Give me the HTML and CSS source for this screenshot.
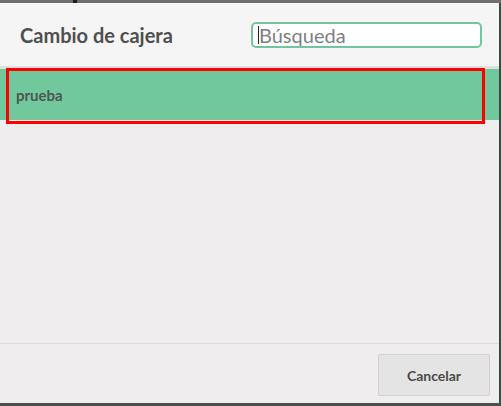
FILE: index.html
```html
<!DOCTYPE html>
<html lang="es">
<head>
<meta charset="utf-8">
<title>Cambio de cajera</title>
<link rel="stylesheet" href="styles.css">
</head>
<body>
<div class="backdrop-top"><span class="mark"></span></div>
<div class="frame">
  <div class="modal">
    <div class="modal-header">
      <h2 class="title">Cambio de cajera</h2>
      <div class="search-wrap">
        <input class="search" type="text" placeholder="Búsqueda">
        <span class="caret"></span>
      </div>
    </div>
    <div class="modal-body">
      <div class="row selected">prueba</div>
      <div class="highlight"></div>
    </div>
    <div class="modal-footer">
      <button class="btn">Cancelar</button>
    </div>
  </div>
  <div class="edge"></div>
</div>
<div class="backdrop-bottom"></div>
</body>
</html>
```
FILE: styles.css
```css
html, body {
  margin: 0;
  padding: 0;
}
body {
  width: 501px;
  height: 406px;
  background: #5e5e5e;
  font-family: Lato, "Open Sans", sans-serif;
  overflow: hidden;
}
.backdrop-top {
  height: 3px;
  background: #6f6f6f;
  display: flex;
}
.mark {
  margin-left: 73px;
  width: 4px;
  height: 3px;
  background: #1c1c1c;
}
.frame {
  display: flex;
  height: 400px;
}
.edge {
  width: 2px;
  background: #3b4a42;
}
.modal {
  width: 499px;
  height: 400px;
  background: #efeded;
  display: flex;
  flex-direction: column;
}
.modal-header {
  height: 63px;
  background: #f5f5f5;
  border-bottom: 3px solid #e0dfdf;
  display: flex;
  align-items: center;
  justify-content: space-between;
  padding: 0 17px 0 20px;
}
.title {
  margin: 0;
  font-size: 20px;
  font-weight: 700;
  color: #4f4f4f;
}
.search-wrap {
  position: relative;
  display: flex;
}
.search {
  box-sizing: border-box;
  width: 231px;
  height: 26px;
  border: 2px solid #72c69d;
  border-radius: 5px;
  background: #fff;
  font-family: Lato, sans-serif;
  font-size: 20px;
  padding: 0 0 0 6px;
  color: #555;
  outline: none;
}
.search::placeholder {
  color: #7e7f85;
}
.caret {
  position: absolute;
  left: 7px;
  top: 4px;
  width: 1px;
  height: 18px;
  background: #222;
}
.modal-body {
  flex: 1;
  position: relative;
  border-bottom: 1px solid #dcdada;
}
.row {
  height: 51px;
  display: flex;
  align-items: center;
  padding-left: 16px;
  font-size: 15px;
  font-weight: 700;
  color: #4d5652;
}
.row.selected {
  background: #70c89c;
}
.highlight {
  position: absolute;
  left: 6px;
  top: -1px;
  width: 479px;
  height: 56px;
  box-sizing: border-box;
  border: 3px solid #ff0000;
}
.modal-footer {
  height: 59px;
  display: flex;
  justify-content: flex-end;
  align-items: flex-start;
  padding: 10px 9px 0 0;
  box-sizing: border-box;
}
.btn {
  width: 112px;
  height: 42px;
  background: #e5e4e4;
  border: 1px solid #d2d0d0;
  border-radius: 2px;
  font-family: Lato, sans-serif;
  font-size: 14px;
  font-weight: 700;
  color: #4a4a4a;
}
.backdrop-bottom {
  height: 3px;
  background: #4f4f4f;
}
```
